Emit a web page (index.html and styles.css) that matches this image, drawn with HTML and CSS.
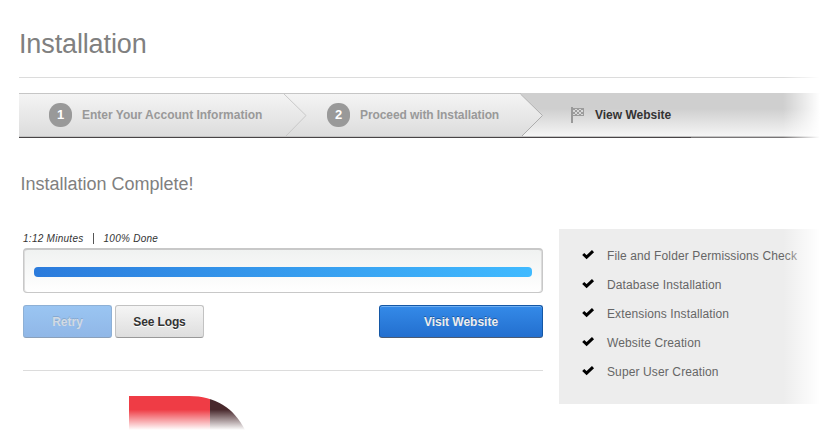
FILE: index.html
```html
<!DOCTYPE html>
<html lang="en">
<head>
<meta charset="utf-8">
<title>Installation</title>
<link rel="stylesheet" href="styles.css">
</head>
<body>
<div class="page">
  <header class="title"><h1>Installation</h1></header>

  <nav class="wizard">
    <svg class="arrows" width="804" height="45" viewBox="0 0 804 45" aria-hidden="true">
      <defs>
        <linearGradient id="step" x1="0" y1="0" x2="0" y2="1"><stop offset="0" stop-color="#f4f4f4"/><stop offset="1" stop-color="#dcdcdc"/></linearGradient>
      </defs>
      <path d="M0 1H502L524 22.500L502 44H0Z" fill="url(#step)"/>
      <path d="M0 .5H502" stroke="#c6c6c6"/>
      <path d="M265 1L287 22.500L266 44" fill="none" stroke="#c9c9c9"/>
      <path d="M501.500 1L523.500 22.500L502 44" fill="none" stroke="#adadad"/>
      <path d="M0 43.500H804" stroke="#c4c4c4"/>
      <path d="M0 44.500H672" stroke="#484446"/>
      <path d="M672 44.500H804" stroke="#777475"/>
    </svg>
    <div class="step first"><span class="num">1</span><span>Enter Your Account Information</span></div>
    <div class="step second"><span class="num">2</span><span>Proceed with Installation</span></div>
    <div class="step current">
      <svg class="flag" width="14" height="16" viewBox="0 0 14 16" aria-hidden="true">
        <path d="M0 0H2V16H0Z" fill="#999"/>
        <path d="M2 1H13V9H2Z" fill="#9c9c9c"/>
        <path d="M4 2h2v1h-2zM8 2h2v1h-2zM2 3h2v2h-2zM6 3h2v2h-2zM10 3h2v2h-2zM4 5h2v2h-2zM8 5h2v2h-2zM2 7h2v1h-2zM6 7h2v1h-2zM10 7h2v1h-2z" fill="#d8d8d8"/>
      </svg>
      <span>View Website</span>
    </div>
  </nav>

  <main class="content">
    <section class="main">
      <h2>Installation Complete!</h2>
      <div class="status"><span>1:12 Minutes</span><i class="sep"></i><span>100% Done</span></div>
      <div class="progress"><div class="bar"></div></div>
      <div class="actions">
        <button class="btn retry">Retry</button>
        <button class="btn logs">See Logs</button>
        <button class="btn visit">Visit Website</button>
      </div>
      <svg class="logo" width="120" height="34" viewBox="0 0 120 34" aria-hidden="true">
        <defs>
          <clipPath id="curve"><path d="M0 0H60C86 0 105 12 116 34H0Z"/></clipPath>
          <linearGradient id="fade" x1="0" y1="0" x2="0" y2="1"><stop offset=".4" stop-color="#fff" stop-opacity="0"/><stop offset="1" stop-color="#fff"/></linearGradient>
        </defs>
        <g clip-path="url(#curve)"><path d="M0 0H81V34H0Z" fill="#ef3c45"/><path d="M81 0H120V34H81Z" fill="#48282c"/></g>
        <path d="M0 0H120V34H0Z" fill="url(#fade)"/>
      </svg>
    </section>
    <ul class="checks">
      <li><svg viewBox="0 0 12 9"><path d="M1.200 4L4.600 7.200L11 1.200"/></svg>File and Folder Permissions Check</li>
      <li><svg viewBox="0 0 12 9"><path d="M1.200 4L4.600 7.200L11 1.200"/></svg>Database Installation</li>
      <li><svg viewBox="0 0 12 9"><path d="M1.200 4L4.600 7.200L11 1.200"/></svg>Extensions Installation</li>
      <li><svg viewBox="0 0 12 9"><path d="M1.200 4L4.600 7.200L11 1.200"/></svg>Website Creation</li>
      <li><svg viewBox="0 0 12 9"><path d="M1.200 4L4.600 7.200L11 1.200"/></svg>Super User Creation</li>
    </ul>
  </main>
  <div class="edge-fade"></div>
</div>
</body>
</html>
```
FILE: styles.css
```css
* { box-sizing: border-box; }
body { margin: 0; background: #fff; font-family: "Liberation Sans", Arial, sans-serif; color: #666; }
.page { position: relative; width: 823px; height: 431px; padding-left: 19px; overflow: hidden; }
.title { height: 78px; border-bottom: 1px solid #dcdcdc; padding-top: 28px; }
h1, h2 { margin: 0; font-weight: normal; color: #808080; white-space: nowrap; }
h1 { font-size: 27px; line-height: 32px; letter-spacing: -.13px; }
.wizard { position: relative; display: flex; width: 804px; height: 45px; margin-top: 15px; background: linear-gradient(#cfcfcf 0, #cfcfcf 35%, #f8f8f8 100%); }
.arrows { position: absolute; left: 0; top: 0; }
.step { position: relative; display: flex; align-items: center; height: 44px; font-size: 12px; font-weight: bold; color: #999; white-space: nowrap; }
.first { width: 278px; padding-left: 30px; }
.second { width: 274px; padding-left: 30px; letter-spacing: -.09px; }
.current { color: #333; }
.num { width: 23px; height: 24px; margin-right: 10px; border-radius: 11px; background: #999; color: #fff; font-size: 13px; line-height: 24px; text-align: center; }
.flag { margin-right: 10px; }
.content { display: flex; padding-left: 4px; }
.main { width: 520px; }
h2 { margin: 35px 0 0 -2.500px; font-size: 18px; line-height: 22px; }
.status { display: flex; align-items: center; height: 13px; margin-top: 37px; font-size: 10px; font-style: italic; letter-spacing: .27px; color: #333; white-space: nowrap; }
.sep { width: 1px; height: 11px; margin: 0 10px 0 9px; background: #555; }
.progress { height: 45px; margin-top: 3px; padding: 17px 10px; border: 1px solid #c8c8c8; border-top-width: 2px; border-radius: 4px; background: linear-gradient(#f0f2f1, #fff); box-shadow: inset 1px 0 #dcdcdc, inset -1px 0 #dcdcdc; }
.bar { height: 10px; border-radius: 4px; background: linear-gradient(90deg, #2b7bdc, #40baff); }
.actions { display: flex; gap: 3px; height: 78px; padding-top: 12px; border-bottom: 1px solid #dcdcdc; }
.btn { height: 33px; width: 89px; padding: 0; border: 1px solid; border-radius: 3px; font: bold 12px/30px "Liberation Sans", Arial, sans-serif; }
.retry { color: #d2dae3; border-color: #8eb0d5 #8eb0d5 #8aa0ba; background: linear-gradient(#9ac5f2, #90b7e7); text-shadow: 0 -1px #86a9d0; }
.logs { color: #333; letter-spacing: -.13px; border-color: #c2c2c2 #c2c2c2 #999; background: linear-gradient(#f5f5f5, #dedede); text-shadow: 0 1px #fff; }
.visit { width: 164px; margin-left: auto; color: #eee; border-color: #1457a5 #1457a5 #4b5b73; background: linear-gradient(#348ae8, #236fcf); box-shadow: inset 0 1px #70aff2; text-shadow: 0 -1px #1c59a3; }
.logo { display: block; margin: 25px 0 0 106px; }
.checks { width: 264px; height: 175px; margin: 91px 0 0 16px; padding: 12px 0 0 23px; list-style: none; background: #ededed; font-size: 12px; letter-spacing: .12px; white-space: nowrap; }
.checks li { display: flex; align-items: center; height: 29px; }
.checks svg { width: 12px; height: 9px; margin: -3px 13px 0 0; overflow: visible; fill: none; stroke: #000; stroke-width: 3; }
.edge-fade { position: absolute; right: 0; top: 0; width: 40px; height: 431px; background: linear-gradient(90deg, rgba(255,255,255,0), #fff 92%); pointer-events: none; }
```
